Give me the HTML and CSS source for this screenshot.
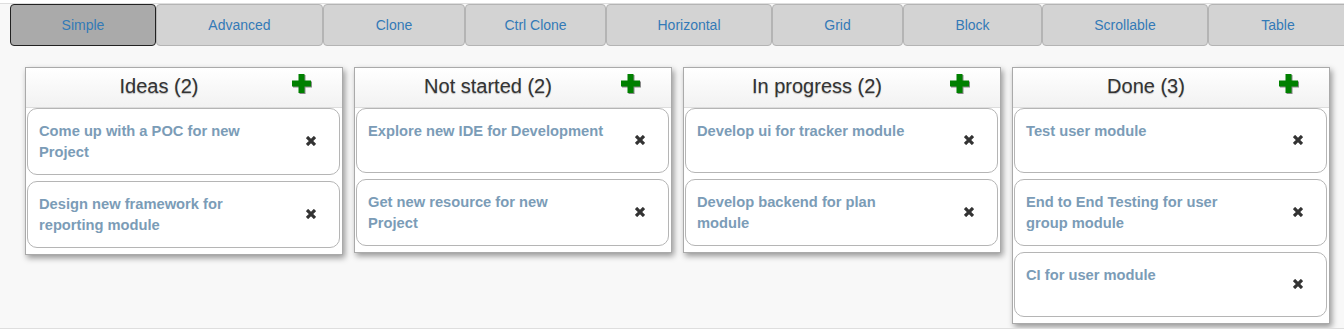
FILE: index.html
```html
<!DOCTYPE html>
<html lang="en">
<head>
<meta charset="utf-8">
<title>Kanban - Simple</title>
<link rel="stylesheet" href="styles.css">
</head>
<body>
<div class="page">
  <nav class="tabs">
    <a class="tab active">Simple</a>
    <a class="tab">Advanced</a>
    <a class="tab">Clone</a>
    <a class="tab">Ctrl Clone</a>
    <a class="tab">Horizontal</a>
    <a class="tab">Grid</a>
    <a class="tab">Block</a>
    <a class="tab">Scrollable</a>
    <a class="tab">Table</a>
  </nav>

  <div class="board">
    <section class="column">
      <header class="col-head">
        <h2 class="col-title">Ideas (2)</h2>
        <svg class="plus" viewBox="0 0 19 19" width="19" height="19"><path d="M6.5 0h6v6.5H19v6h-6.5V19h-6v-6.5H0v-6h6.5z"/></svg>
      </header>
      <div class="card"><p class="card-text">Come up with a POC for new<br>Project</p><svg class="remove" viewBox="0 0 10 10" width="10" height="10"><path d="M1 1L9 9M9 1L1 9"/></svg></div>
      <div class="card"><p class="card-text">Design new framework for<br>reporting module</p><svg class="remove" viewBox="0 0 10 10" width="10" height="10"><path d="M1 1L9 9M9 1L1 9"/></svg></div>
    </section>

    <section class="column">
      <header class="col-head">
        <h2 class="col-title">Not started (2)</h2>
        <svg class="plus" viewBox="0 0 19 19" width="19" height="19"><path d="M6.5 0h6v6.5H19v6h-6.5V19h-6v-6.5H0v-6h6.5z"/></svg>
      </header>
      <div class="card"><p class="card-text">Explore new IDE for Development</p><svg class="remove" viewBox="0 0 10 10" width="10" height="10"><path d="M1 1L9 9M9 1L1 9"/></svg></div>
      <div class="card"><p class="card-text">Get new resource for new<br>Project</p><svg class="remove" viewBox="0 0 10 10" width="10" height="10"><path d="M1 1L9 9M9 1L1 9"/></svg></div>
    </section>

    <section class="column">
      <header class="col-head">
        <h2 class="col-title">In progress (2)</h2>
        <svg class="plus" viewBox="0 0 19 19" width="19" height="19"><path d="M6.5 0h6v6.5H19v6h-6.5V19h-6v-6.5H0v-6h6.5z"/></svg>
      </header>
      <div class="card"><p class="card-text">Develop ui for tracker module</p><svg class="remove" viewBox="0 0 10 10" width="10" height="10"><path d="M1 1L9 9M9 1L1 9"/></svg></div>
      <div class="card"><p class="card-text">Develop backend for plan<br>module</p><svg class="remove" viewBox="0 0 10 10" width="10" height="10"><path d="M1 1L9 9M9 1L1 9"/></svg></div>
    </section>

    <section class="column">
      <header class="col-head">
        <h2 class="col-title">Done (3)</h2>
        <svg class="plus" viewBox="0 0 19 19" width="19" height="19"><path d="M6.5 0h6v6.5H19v6h-6.5V19h-6v-6.5H0v-6h6.5z"/></svg>
      </header>
      <div class="card"><p class="card-text">Test user module</p><svg class="remove" viewBox="0 0 10 10" width="10" height="10"><path d="M1 1L9 9M9 1L1 9"/></svg></div>
      <div class="card"><p class="card-text">End to End Testing for user<br>group module</p><svg class="remove" viewBox="0 0 10 10" width="10" height="10"><path d="M1 1L9 9M9 1L1 9"/></svg></div>
      <div class="card"><p class="card-text">CI for user module</p><svg class="remove" viewBox="0 0 10 10" width="10" height="10"><path d="M1 1L9 9M9 1L1 9"/></svg></div>
    </section>
  </div>
</div>
</body>
</html>
```

FILE: styles.css
```css
* { box-sizing: border-box; }

html, body {
  margin: 0;
  padding: 0;
  background: #ffffff;
  font-family: "Liberation Sans", Arial, Helvetica, sans-serif;
  overflow: hidden;
}

.page {
  margin-top: 3px;
  height: 326px;
  background: #f8f8f8;
  border-top: 1px solid #dedede;
  border-bottom: 1px solid #dedede;
  overflow: hidden;
}

.tabs {
  display: grid;
  grid-template-columns: 146px 167px 142px 141px 166px 131px 139px 166px 140px;
  padding-left: 10px;
  height: 42px;
}

.tab {
  display: flex;
  align-items: center;
  justify-content: center;
  height: 42px;
  background: #d3d3d3;
  border: 1px solid #b4b4b4;
  border-radius: 4px;
  color: #337ab7;
  font-size: 14px;
  cursor: pointer;
}

.tab.active {
  background: #aaaaaa;
  border-color: #222222;
}

.board {
  display: flex;
  align-items: flex-start;
  gap: 11px;
  padding: 21px 0 0 25px;
}

.column {
  flex: 0 0 318px;
  width: 318px;
  background: #ffffff;
  border: 1px solid #aaaaaa;
  box-shadow: 2px 3px 6px rgba(0, 0, 0, 0.4);
  padding-bottom: 6px;
}

.col-head {
  display: grid;
  grid-template-columns: 266px 1fr;
  align-items: start;
  height: 40px;
  background: linear-gradient(#ffffff, #f2f2f2);
  border-bottom: 1px solid #dddddd;
}

.col-title {
  margin: 6px 0 0;
  text-align: center;
  font-size: 20px;
  font-weight: normal;
  color: #333333;
  line-height: 24px;
  text-shadow: 0 1px 1px rgba(0, 0, 0, 0.25);
}

.plus {
  display: block;
  margin-top: 6px;
  fill: #008000;
  filter: drop-shadow(1px 1px 0.6px rgba(0, 0, 0, 0.45));
}

.card {
  display: flex;
  align-items: flex-start;
  min-height: 65px;
  margin: 0 2px 6px 1px;
  background: #ffffff;
  border: 1px solid #b5b5b5;
  border-radius: 10px;
  padding: 12px 0 11px 11px;
}

.card:last-child {
  margin-bottom: 0;
}

.card-text {
  margin: 0;
  width: 245px;
  font-size: 14.7px;
  font-weight: bold;
  line-height: 21px;
  color: #7b9cb7;
}

.remove {
  align-self: center;
  margin-left: 22px;
  margin-top: -3px;
  stroke: #333333;
  stroke-width: 3.2;
  fill: none;
}
```
